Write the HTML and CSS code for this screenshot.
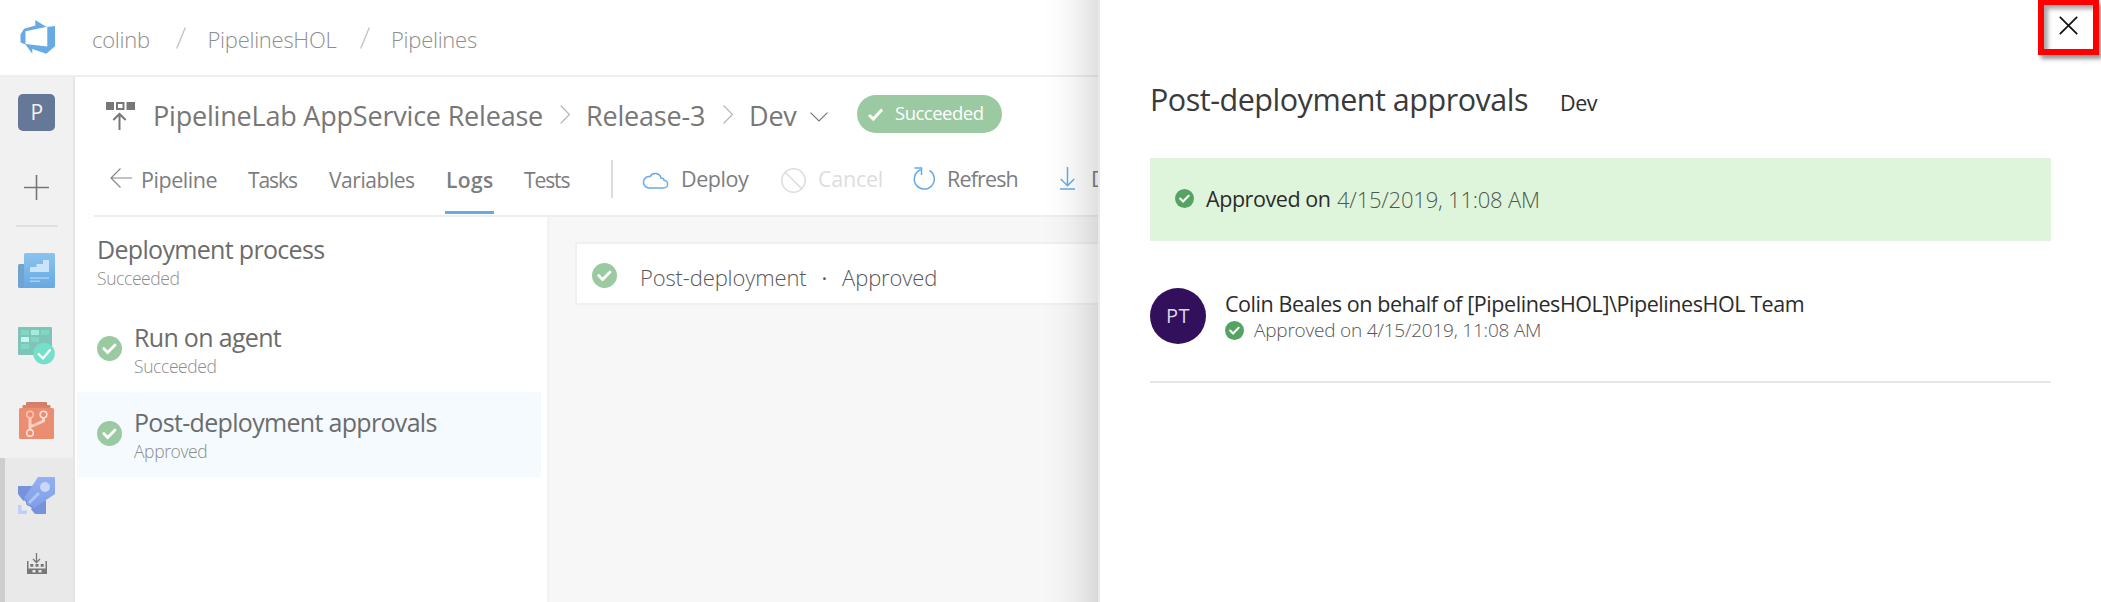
FILE: index.html
```html
<!DOCTYPE html>
<html lang="en">
<head>
<meta charset="utf-8">
<title>Release-3 - Pipelines</title>
<link rel="stylesheet" href="styles.css">
</head>
<body>
<svg class="defs" width="0" height="0">
  <symbol id="ok" viewBox="0 0 25 25"><circle cx="12.5" cy="12.5" r="12.5" fill="currentColor"/><path d="M6.8 12.6 L10.6 16.4 L18 9" fill="none" stroke="#fff" stroke-width="2.8" stroke-linecap="round"/></symbol>
  <symbol id="next" viewBox="0 0 10 19"><path d="M.6 .5 L9.4 9.5 L.6 18.5" fill="none" stroke="#b4b4b4" stroke-width="1.1"/></symbol>
</svg>
<div class="app">
  <header class="topbar">
    <svg class="logo" width="36" height="36" viewBox="0 0 36 36"><path fill="#66abe6" fill-rule="evenodd" d="M0.5 14.5 L4 8.8 L15.3 5.6 V0 L26.5 7 L35 6 V26.3 L26.3 33.7 L12.3 29 V33.8 L5.5 24.5 L0.5 22.5 Z M5.5 11.3 V24 L27.3 26.6 V6.8 Z"/></svg>
    <span class="crumb">colinb</span>
    <svg width="10" height="22" viewBox="0 0 10 22"><path d="M9.3 .5 L.7 21.5" stroke="#c4c4c4" stroke-width="1.4"/></svg>
    <span class="crumb hol">PipelinesHOL</span>
    <svg width="10" height="22" viewBox="0 0 10 22"><path d="M9.3 .5 L.7 21.5" stroke="#c4c4c4" stroke-width="1.4"/></svg>
    <span class="crumb">Pipelines</span>
  </header>
  <div class="body">
    <nav class="sidebar">
      <div class="project">P</div>
      <svg class="add" width="25" height="25" viewBox="0 0 25 25"><path d="M12.5 0 V25 M0 12.5 H25" stroke="#777" stroke-width="1.6"/></svg>
      <div class="rule"></div>
      <svg class="boards" width="37" height="35" viewBox="0 0 37 35">
        <defs><linearGradient id="g1" x1="0" y1="0" x2="0" y2="1"><stop stop-color="#8cc3ee"/><stop offset="1" stop-color="#66a9e2"/></linearGradient></defs>
        <rect y="11" width="12" height="24" rx="1.5" fill="#71a3cf"/><rect x="6" width="31" height="35" rx="1.5" fill="url(#g1)"/>
        <path d="M12 19 V14 H18.500 V11 H25 V7 H31 V19 Z" fill="#cbe4f8"/><path d="M12 25 H31 M12 28.300 H22" stroke="#a9d1f2" stroke-width="1.400"/></svg>
      <svg class="plans" width="37" height="37" viewBox="0 0 37 37">
        <rect width="34" height="28" rx="1" fill="#7fc4b4"/>
        <path d="M3 3 H11 V8 H3 Z M23 3 H31 V8 H23 Z M13 10 H21 V15 H13 Z M3 17 H11 V22 H3 Z" fill="#80d8c4"/><path d="M13 3 H21 V8 H13 Z" fill="#a5eadb"/><path d="M3 10 H11 V15 H3 Z" fill="#bffbee"/>
        <circle cx="26" cy="26.500" r="10.800" fill="#74dfcb"/><path d="M20 26.500 L25 31.300 L32.500 22.500" fill="none" stroke="#fff" stroke-width="2.300"/></svg>
      <svg class="repos" width="35" height="37" viewBox="0 0 35 37">
        <rect x="7" width="21" height="6" rx="1" fill="#d0806a"/><rect x="3.500" y="3" width="28" height="6" rx="1" fill="#db8168"/><rect y="6" width="35" height="31" rx="1.500" fill="#eb8d70"/>
        <path d="M11 16 V27 M24.500 15.500 V19 L11 25" fill="none" stroke="#f8cfc1" stroke-width="3"/>
        <g fill="#eb8d70" stroke="#fbe0d7" stroke-width="1.600"><circle cx="11" cy="12.500" r="3.300" stroke="#f6c3b3"/><circle cx="24.500" cy="12.500" r="3.300"/><circle cx="11" cy="31" r="3.300"/></g></svg>
      <div class="selected">
        <svg class="rocket" width="37" height="37" viewBox="0 0 37 37">
          <defs><linearGradient id="g2" x1="0" y1="0" x2="0" y2="1"><stop stop-color="#94b2f2"/><stop offset="1" stop-color="#7e9ee6"/></linearGradient></defs>
          <path d="M0 9 H15 L28 24 V37 H17 L12 31 L6 25 L0 17 Z" fill="#7692d8"/><path d="M20 0 H37 V17 L16 31 L13 28 L11 29 L8 27 L9.500 24 L6 21 Z" fill="url(#g2)"/>
          <circle cx="27" cy="10" r="5" fill="#c8d7fa"/><path d="M21 16 L11 26" stroke="#afc6f8" stroke-width="2.600"/>
          <path d="M0 28 H3.500 V33.500 H9 V37 H0 Z" fill="#bbd0fb"/><path d="M4 26 L6 23 L8 25 L8 29 L11 29 L14 31 L12 33 L10 31 Z" fill="#e9e9e9"/></svg>
        <svg class="build" width="20" height="21" viewBox="0 0 20 21"><path d="M9.500 0 V9 M6 6 L9.500 9.500 L13 6" fill="none" stroke="#777" stroke-width="1.300"/><path fill-rule="evenodd" fill="#777" d="M0 8 H1.500 V15.500 H18.500 V8 H20 V21 H0 Z M5.500 17 V19.500 H8.500 V17 Z M11.500 17 V19.500 H14.500 V17 Z M3.300 11 H6.300 V13.800 H3.300 Z M8.500 11 H11.500 V13.800 H8.500 Z M13.700 11 H16.700 V13.800 H13.700 Z"/></svg>
      </div>
    </nav>
    <main class="main">
      <div class="titlebar">
        <svg width="29" height="28" viewBox="0 0 29 28"><path d="M0 0 H8 V8 H0 Z M20.500 0 H29 V8 H20.500 Z" fill="#777"/><path d="M11 1 H17.500 V7 H11 Z M13.500 28 V12.500 M7.300 18 L13.500 12 L19.700 18" fill="none" stroke="#777" stroke-width="2"/></svg>
        <span class="name">PipelineLab AppService Release</span>
        <svg class="chev" width="10" height="19"><use href="#next"/></svg>
        <span class="name">Release-3</span>
        <svg class="chev" width="10" height="19"><use href="#next"/></svg>
        <span class="name">Dev</span>
        <svg class="down" width="18" height="10" viewBox="0 0 18 10"><path d="M.5 .6 L9 9 L17.500 .6" fill="none" stroke="#777" stroke-width="1.200"/></svg>
        <div class="pill"><svg width="15" height="13" viewBox="0 0 15 13"><path d="M1 7 L5.300 11 L14 1.500" fill="none" stroke="#fff" stroke-width="3"/></svg><span>Succeeded</span></div>
      </div>
      <div class="toolbar">
        <svg class="back" width="22" height="20" viewBox="0 0 22 20"><path d="M22 10 H1 M10.500 .5 L1 10 L10.500 19.500" fill="none" stroke="#888" stroke-width="1.200"/></svg>
        <span class="tab pipe">Pipeline</span><span class="tab t">Tasks</span><span class="tab v">Variables</span><span class="tab on">Logs</span><span class="tab t">Tests</span>
        <i class="sep"></i>
        <svg width="25" height="17" viewBox="0 0 25 17"><path d="M5.500 16 H20.500 A3.900 3.900 0 0 0 21 8.200 A2.600 2.600 0 0 0 18 6 A6 6 0 0 0 7 4.500 A5.700 5.700 0 0 0 5.500 16 Z" fill="none" stroke="#66abe6" stroke-width="1.500"/></svg>
        <span class="tool">Deploy</span>
        <svg width="25" height="25" viewBox="0 0 25 25"><path d="M4 4 L21 21" stroke="#ddd" stroke-width="1.600"/><circle cx="12.500" cy="12.500" r="11.700" fill="none" stroke="#ddd" stroke-width="1.600"/></svg>
        <span class="tool off">Cancel</span>
        <svg class="reload" width="22" height="23" viewBox="0 0 22 23"><path d="M16.500 3.500 A10 10 0 1 1 7.500 2.800 M1.500 1 H8.500 V8" fill="none" stroke="#66abe6" stroke-width="1.500"/></svg>
        <span class="tool ref">Refresh</span>
        <svg class="reload" width="15" height="23" viewBox="0 0 15 23"><path d="M7.500 0 V18.500 M.8 12 L7.500 18.700 L14.200 12 M0 22 H15" fill="none" stroke="#66abe6" stroke-width="1.500"/></svg>
        <span class="tool">Download</span>
      </div>
      <div class="content">
        <section class="steps">
          <div class="step first"><div><div class="st">Deployment process</div><div class="ss">Succeeded</div></div></div>
          <div class="step"><svg class="ok" width="25" height="25"><use href="#ok"/></svg><div><div class="st">Run on agent</div><div class="ss">Succeeded</div></div></div>
          <div class="step active"><svg class="ok" width="25" height="25"><use href="#ok"/></svg><div><div class="st">Post-deployment approvals</div><div class="ss">Approved</div></div></div>
        </section>
        <section class="detail">
          <div class="card"><svg class="ok" width="25" height="25"><use href="#ok"/></svg><span>Post-deployment</span><b>·</b><span>Approved</span></div>
        </section>
      </div>
    </main>
  </div>
</div>
<aside class="drawer">
  <button class="close" aria-label="Close"><svg width="19" height="19" viewBox="0 0 19 19"><path d="M.8 .8 L18.200 18.200 M18.200 .8 L.8 18.200" stroke="#111" stroke-width="1.700"/></svg></button>
  <div class="head"><h1>Post-deployment approvals</h1><span class="env">Dev</span></div>
  <div class="banner"><svg class="okd" width="19" height="19"><use href="#ok"/></svg><span class="said">Approved on</span><span class="date">4/15/2019, 11:08 AM</span></div>
  <div class="person">
    <div class="avatar">PT</div>
    <div><div class="who">Colin Beales on behalf of [PipelinesHOL]\PipelinesHOL Team</div>
      <div class="when"><svg class="okd" width="19" height="19"><use href="#ok"/></svg><span>Approved on 4/15/2019, 11:08 AM</span></div></div>
  </div>
</aside>
</body>
</html>
```
FILE: styles.css
```css
* { box-sizing: border-box; }
html, body { height: 100%; }
body { margin: 0; overflow: hidden; background: #fff; font-family: "Open Sans", "Noto Sans", sans-serif; font-size: 21.5px; letter-spacing: -.43px; white-space: nowrap; }
svg { display: block; flex: none; overflow: visible; }
.defs { position: absolute; }
.app { height: 602px; display: flex; flex-direction: column; overflow: hidden; }

.topbar { height: 77px; flex: none; border-bottom: 2px solid #eee; display: grid; grid-template-columns: 92px 84px 31.5px 152.500px 31px auto; align-items: center; color: #8e8e8e; }
.logo { margin-left: 20px; }
.crumb { padding-top: 2px; font-weight: 300; font-size: 22px; letter-spacing: -.27px; }
.body { flex: 1; display: flex; min-height: 0; }

.sidebar { width: 75px; flex: none; background: #f1f1f1; border-right: 2px solid #e4e4e4; display: flex; flex-direction: column; align-items: flex-start; padding-top: 17px; }
.project { width: 37px; height: 37px; margin-left: 18px; border-radius: 5px; background: #667897; color: #f2f2f2; font-size: 21px; line-height: 37px; text-align: center; }
.add { margin: 44px 0 0 24px; }
.rule { width: 42px; height: 2px; margin: 25px 0 0 16px; background: #dfdfdf; }
.boards { margin: 26px 0 0 18px; }
.plans { margin: 39px 0 0 18px; }
.repos { margin: 38px 0 0 19px; }
.selected { width: 73px; flex: 1; margin-top: 19px; background: #e9e9e9; border-left: 5px solid #cecece; }
.rocket { margin: 19px 0 0 13px; }
.build { margin: 39px 0 0 22px; }

.main { flex: 1; min-width: 0; display: flex; flex-direction: column; }
.titlebar { height: 77px; flex: none; padding-left: 31px; display: grid; grid-template-columns: 47px 407px 26px 137px 26px 61px 47px auto; align-items: center; font-size: 27px; letter-spacing: -.2px; color: #777; }
.chev { margin-top: -2px; }
.down { margin-top: 3px; }
.pill { width: 145px; height: 38px; margin-top: -3px; padding-left: 11px; border-radius: 19px; background: #9bc9a2; color: #fff; display: flex; align-items: center; gap: 12px; font-size: 18.5px; letter-spacing: -.5px; }
.pill span { line-height: 34px; margin-top: -3px; }

.toolbar { height: 63px; flex: none; margin-left: 19px; padding: 0 0 10px 16px; border-bottom: 2px solid #eee; display: grid; grid-template-columns: 31px 107px 81px 116px 79px 87px 32px 38px 100px 37px 95px 34px 113px 31px auto; align-items: center; color: #7d7d7d; }
.back { margin-top: -4px; }
.tab { line-height: 52px; position: relative; }
.tab.t { font-size: 21px; letter-spacing: -1.1px; }
.tab.v { font-size: 21px; letter-spacing: -.45px; }
.tab.on { width: 49px; padding-left: 1px; font-weight: 600; font-size: 21px; letter-spacing: .4px; }
.tab.on::after { content: ""; position: absolute; left: 0; right: 0; bottom: -8px; height: 3px; background: #66abe6; }
.sep { width: 2px; height: 38px; margin-top: -3px; background: #dcdcdc; }
.tool { margin-top: -3px; }
.reload { margin-top: -3px; }
.off { color: #ddd; letter-spacing: -.25px; }
.ref { letter-spacing: -.85px; }

.content { flex: 1; display: flex; min-height: 0; }
.steps { width: 475px; flex: none; border-right: 3px solid #f3f3f3; padding-right: 6px; }
.step { height: 85px; margin-left: 2px; padding: 13px 0 0 20px; display: flex; gap: 12px; }
.step.first { height: 90px; padding-top: 15px; }
.active { background: #f4fafd; }
.ok { color: #9bc9a2; }
.step .ok { margin-top: 16px; }
.st { font-size: 25px; line-height: 34px; letter-spacing: -.68px; color: #6c6c6c; }
.ss { font-size: 17.5px; line-height: 25px; font-weight: 300; letter-spacing: -.4px; color: #8c8c8c; }
.detail { flex: 1; background: #f7f7f7; padding: 25px 0 0 25px; }
.card { height: 63px; border: 2px solid #f0f0f0; background: #fff; padding-left: 15px; display: flex; align-items: center; color: #585858; font-weight: 300; font-size: 22px; letter-spacing: -.14px; }
.card .ok { margin-right: 23px; margin-top: 4px; }
.card span { margin-top: 6px; }
.card b { font-weight: 400; margin: 6px 15px 0; }

.drawer { position: absolute; top: 0; right: 0; width: 1003px; height: 602px; padding: 78px 50px 0 50px; background: #fff; border-left: 2px solid #e9e9e9; color: #2b2b2b; }
.drawer::before { content: ""; position: absolute; top: 0; bottom: 0; left: -57px; width: 55px; background: linear-gradient(to left, rgba(0, 0, 0, .12), rgba(0, 0, 0, .075) 25%, rgba(0, 0, 0, .035) 50%, rgba(0, 0, 0, .01) 75%, transparent); }
.close { position: absolute; top: 0; right: 2px; width: 61px; height: 55px; margin: 0; padding: 0 0 3px; border: 6px solid #f00; border-top-width: 5px; background: #fff; display: flex; align-items: center; justify-content: center; box-shadow: 3px 4px 4px rgba(0, 0, 0, .4), inset 4px 4px 4px rgba(0, 0, 0, .35); }
.head { height: 42px; display: flex; align-items: baseline; }
h1 { width: 410px; margin: 0; font-size: 30.500px; font-weight: 400; line-height: 42px; letter-spacing: -.48px; color: #3a3a3a; }
.banner { height: 83px; margin-top: 38px; padding-left: 25px; background: #dff5db; display: flex; align-items: center; }
.okd { color: #55a362; margin-top: -3px; }
.banner span { margin-top: -2px; }
.said { margin-left: 12px; width: 131px; }
.date { color: #4d5a4b; font-weight: 300; font-size: 22px; letter-spacing: -.21px; }
.person { margin-top: 47px; height: 95px; border-bottom: 2px solid #e6e6e6; display: flex; gap: 19px; }
.avatar { width: 56px; height: 56px; border-radius: 50%; background: #32105c; color: #ddd4e6; font-size: 20px; letter-spacing: .6px; line-height: 56px; text-align: center; }
.who { line-height: 32px; height: 30px; }
.when { display: flex; align-items: center; height: 24px; font-size: 19px; font-weight: 300; letter-spacing: -.21px; color: #555; gap: 10px; }
.when .okd { margin-top: 1px; }
```
